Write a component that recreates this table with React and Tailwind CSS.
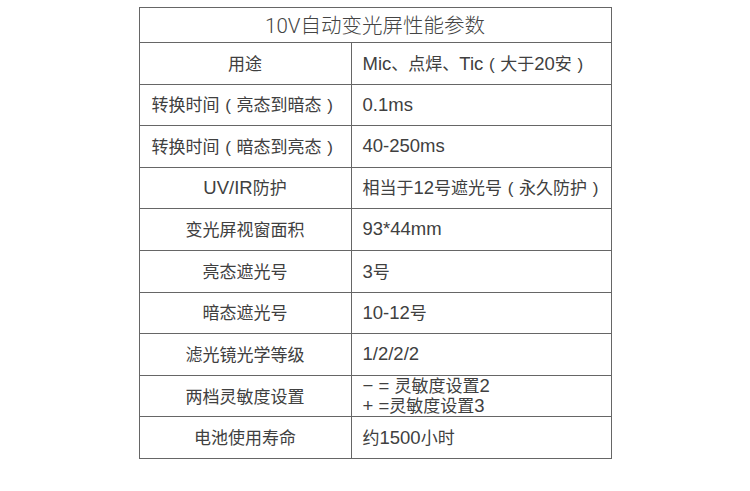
import React from "react";

const rows = [
  ["用途", "Mic、点焊、Tic（大于20安）"],
  ["转换时间（亮态到暗态）", "0.1ms"],
  ["转换时间（暗态到亮态）", "40-250ms"],
  ["UV/IR防护", "相当于12号遮光号（永久防护）"],
  ["变光屏视窗面积", "93*44mm"],
  ["亮态遮光号", "3号"],
  ["暗态遮光号", "10-12号"],
  ["滤光镜光学等级", "1/2/2/2"],
  ["两档灵敏度设置", null],
  ["电池使用寿命", "约1500小时"],
];

const SPLIT = /([（）]|[\u3000-\u303f\u3400-\u9fff\uff01-\uff07\uff0a-\uffef]+)/;
const IS_CJK = /^[\u3000-\u303f\u3400-\u9fff\uff01-\uff07\uff0a-\uffef]+$/;

function T({ text }) {
  const parts = text.split(SPLIT).filter((p) => p !== "");
  return (
    <>
      {parts.map((p, i) => {
        if (p === "（" || p === "）") {
          return (
            <span
              key={i}
              className="inline-block w-[17px] text-center text-[17px]"
              style={{ fontFamily: '"Liberation Sans", sans-serif' }}
            >
              {p === "（" ? "(" : ")"}
            </span>
          );
        }
        if (IS_CJK.test(p)) {
          return (
            <span
              key={i}
              className="text-[17px]"
              style={{ fontFamily: '"Noto Sans CJK SC", sans-serif' }}
            >
              {p}
            </span>
          );
        }
        return (
          <span
            key={i}
            className="text-[18.5px]"
            style={{ fontFamily: '"Liberation Sans", sans-serif' }}
          >
            {p}
          </span>
        );
      })}
    </>
  );
}

export default function App() {
  return (
    <div
      className="w-[750px] h-[491px] bg-white flex justify-center pt-[7px]"
      style={{ fontFamily: '"Liberation Sans", "Noto Sans CJK SC", sans-serif' }}
    >
      <table className="border-collapse w-[473px] h-[451px] self-start text-[#404040]">
        <tbody>
          <tr className="h-[35px]">
            <td
              colSpan={2}
              className="border border-[#666] text-center text-[#444] leading-none"
            >
              <span
                className="text-[20.5px] font-light"
                style={{ fontFamily: "Roboto, sans-serif" }}
              >
                10V
              </span>
              <span
                className="text-[20.5px] font-light"
                style={{ fontFamily: '"Noto Sans CJK SC", sans-serif' }}
              >
                自动变光屏性能参数
              </span>
            </td>
          </tr>
          {rows.map(([k, v], i) => (
            <tr key={i} className="h-[41.6px]">
              <td className="border border-[#666] w-[212px] text-center leading-none">
                <T text={k} />
              </td>
              <td className="border border-[#666] pl-[11px] leading-none">
                {v === null ? (
                  <div className="flex flex-col leading-[18px]">
                    <span>
                      <T text="− = 灵敏度设置2" />
                    </span>
                    <span>
                      <T text="+ =灵敏度设置3" />
                    </span>
                  </div>
                ) : (
                  <T text={v} />
                )}
              </td>
            </tr>
          ))}
        </tbody>
      </table>
    </div>
  );
}
